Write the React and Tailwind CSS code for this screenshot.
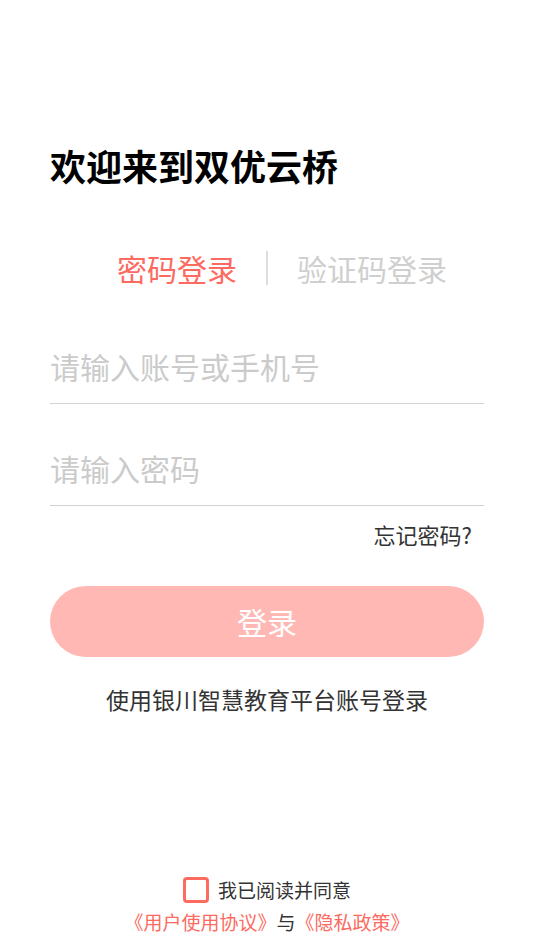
const font = { fontFamily: '"Noto Sans CJK SC", "Noto Sans", sans-serif' };

export default function App() {
  return (
    <div className="min-h-[950px] bg-white flex flex-col px-[50px]" style={font}>
      {/* Title */}
      <h1 className="mt-[142px] text-[36px] leading-[46px] font-bold text-black">欢迎来到双优云桥</h1>

      {/* Tabs */}
      <div className="mt-[60px] grid grid-cols-[1fr_auto_1fr] items-center">
        <span className="justify-self-end text-[30px] leading-[40px] text-[#fd6a5f]">密码登录</span>
        <span className="mx-[29px] w-[2px] h-[34px] bg-[#dedede]" />
        <span className="justify-self-start text-[30px] leading-[40px] text-[#cfcfcf]">验证码登录</span>
      </div>

      {/* Account */}
      <div className="mt-[32px] border-b border-[#d2d2d2] h-[84px] flex items-center pt-[10px]">
        <input
          className="w-full outline-none text-[30px] text-black placeholder:text-[#cbcbcb] bg-transparent"
          placeholder="请输入账号或手机号"
        />
      </div>

      {/* Password */}
      <div className="mt-[18px] border-b border-[#d2d2d2] h-[84px] flex items-center pt-[10px]">
        <input
          type="password"
          className="w-full outline-none text-[30px] text-black placeholder:text-[#cbcbcb] bg-transparent"
          placeholder="请输入密码"
        />
      </div>

      <div className="flex justify-end pr-[12px] mt-[11px]">
        <span className="text-[22px] leading-[34px] text-[#333]">忘记密码?</span>
      </div>

      <button className="mt-[35px] h-[71px] w-full rounded-full bg-[#ffb8b4] text-white text-[30px]">登录</button>

      <p className="mt-[26px] text-center text-[23px] leading-[32px] text-[#333]">使用银川智慧教育平台账号登录</p>

      {/* Agreement */}
      <div className="mt-auto pb-[12px] flex flex-col items-center">
        <div className="flex items-center gap-[9px] h-[32px]">
          <span className="w-[26px] h-[26px] rounded-[4px] border-[3px] border-[#fd6a5f]" />
          <span className="text-[19px] leading-[28px] text-[#333]">我已阅读并同意</span>
        </div>
        <p className="text-[19px] leading-[32px]">
          <span className="text-[#fd6a5f]">《用户使用协议》</span>
          <span className="text-[#333]">与</span>
          <span className="text-[#fd6a5f]">《隐私政策》</span>
        </p>
      </div>
    </div>
  );
}
